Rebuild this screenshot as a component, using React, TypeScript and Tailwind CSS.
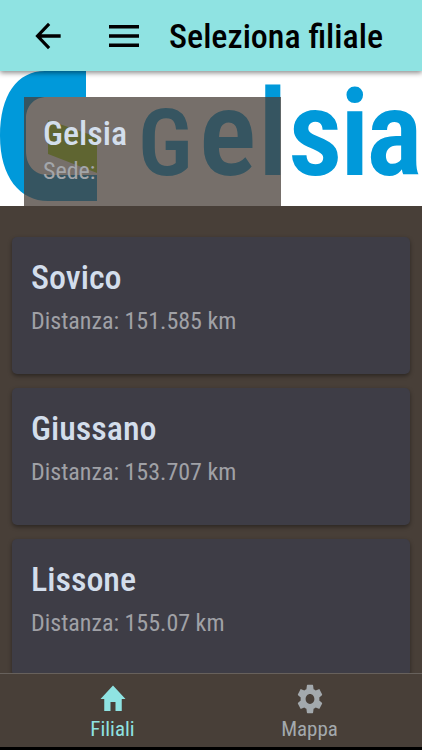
import React from "react";

type Branch = { name: string; distance: string };

const branches: Branch[] = [
  { name: "Sovico", distance: "151.585 km" },
  { name: "Giussano", distance: "153.707 km" },
  { name: "Lissone", distance: "155.07 km" },
];

function Header() {
  return (
    <header className="relative z-10 flex h-[71px] shrink-0 items-center bg-[#8fe3e2] pl-7 text-black shadow-[0_2px_5px_rgba(0,0,0,0.45)]">
      <button type="button" aria-label="Indietro" className="flex h-10 w-10 items-center justify-center">
        <svg className="h-[40px] w-[38px]" viewBox="0 0 24 24" preserveAspectRatio="none" fill="currentColor">
          <path d="M20 11H7.83l5.59-5.59L12 4l-8 8 8 8 1.41-1.41L7.83 13H20v-2z" />
        </svg>
      </button>
      <button type="button" aria-label="Menu" className="ml-9 flex h-10 w-10 items-center justify-center">
        <svg className="h-6 w-[30px]" viewBox="0 0 30 24" fill="currentColor">
          <path d="M0 1h30v3.5H0zM0 10.2h30v3.5H0zM0 19.4h30v3.5H0z" />
        </svg>
      </button>
      <h1 className="ml-[25px] whitespace-nowrap text-[34px] leading-9 font-medium">Seleziona filiale</h1>
    </header>
  );
}

function Banner() {
  return (
    <section className="relative shrink-0 bg-white">
      <svg className="block w-full" viewBox="0 0 422 135" role="img" aria-label="Logo Gelsia">
        <path d="M86 0H45C17 0 0 24 0 65s20 65 48 65h49v-26H48C34 104 26 94 26 80V48C26 35 34 26 47 26h39z" fill="#0099da" />
        <path d="M48 49l49 17v36L48 83z" fill="#a5d51f" />
        <text
          x="138 199 258 288 340 366"
          y="104"
          fill="#0099da"
          fontFamily="'Roboto Condensed', Roboto, sans-serif"
          fontWeight="600"
          fontSize="120"
        >
          <tspan fontSize="93">G</tspan>elsia
        </text>
      </svg>
      <div className="absolute bottom-0 left-6 h-[109px] w-[257px] bg-[#483f38]/75 px-[19px] pt-4">
        <h2 className="text-[34px] leading-10 font-medium text-[#d3deec]">Gelsia</h2>
        <p className="text-[24px] leading-9 text-[#a3a6aa]">Sede:</p>
      </div>
    </section>
  );
}

function BranchCard({ name, distance }: Branch) {
  return (
    <li className="h-[137px] shrink-0 rounded-[5px] bg-[#3e3d46] px-[19px] pt-5 shadow-[0_2px_4px_rgba(0,0,0,0.4)]">
      <h2 className="text-[34px] leading-10 font-medium text-[#d3deec]">{name}</h2>
      <p className="mt-1.5 text-[24px] leading-9 text-[#a0a1a6]">Distanza: {distance}</p>
    </li>
  );
}

function TabBar() {
  return (
    <nav className="flex h-[77px] shrink-0 border-t border-b-[3px] border-t-[#67615c] border-b-black bg-[#483f38]">
      <a href="#filiali" aria-current="page" className="flex flex-1 flex-col items-center pt-[7px] pl-[14px] text-[#8fe3e2]">
        <svg className="h-9 w-[30px]" viewBox="0 0 24 24" preserveAspectRatio="none" fill="currentColor">
          <path d="M10 20v-6h4v6h5v-8h3L12 3 2 12h3v8z" />
        </svg>
        <span className="text-[21px] leading-6">Filiali</span>
      </a>
      <a href="#mappa" className="flex flex-1 flex-col items-center pt-[7px] pr-[14px] text-[#a3a9ad]">
        <svg className="h-9 w-[30px]" viewBox="0 -0.7 24 25.4" preserveAspectRatio="none" fill="currentColor">
          <path d="M19.43 12.98c.04-.32.07-.64.07-.98s-.03-.66-.07-.98l2.11-1.65c.19-.15.24-.42.12-.64l-2-3.46c-.12-.22-.39-.3-.61-.22l-2.49 1c-.52-.4-1.08-.73-1.69-.98l-.38-2.65C14.46 2.18 14.25 2 14 2h-4c-.25 0-.46.18-.49.42l-.38 2.65c-.61.25-1.17.59-1.69.98l-2.49-1c-.23-.09-.49 0-.61.22l-2 3.46c-.13.22-.07.49.12.64l2.11 1.65c-.04.32-.07.65-.07.98s.03.66.07.98l-2.11 1.65c-.19.15-.24.42-.12.64l2 3.46c.12.22.39.3.61.22l2.49-1c.52.4 1.08.73 1.69.98l.38 2.65c.03.24.24.42.49.42h4c.25 0 .46-.18.49-.42l.38-2.65c.61-.25 1.17-.59 1.69-.98l2.49 1c.23.09.49 0 .61-.22l2-3.46c.12-.22.07-.49-.12-.64l-2.11-1.65zM12 15.5c-1.93 0-3.5-1.57-3.5-3.5s1.57-3.5 3.5-3.5 3.5 1.57 3.5 3.5-1.57 3.5-3.5 3.5z" />
        </svg>
        <span className="text-[21px] leading-6">Mappa</span>
      </a>
    </nav>
  );
}

export default function App() {
  return (
    <div className="flex h-screen flex-col overflow-hidden bg-[#483f38] font-['Roboto_Condensed',Roboto,sans-serif]">
      <Header />
      <main className="flex min-h-0 flex-1 flex-col overflow-hidden">
        <Banner />
        <ul className="flex flex-col gap-[14px] px-3 pt-[31px]">
          {branches.map((branch) => (
            <BranchCard key={branch.name} {...branch} />
          ))}
        </ul>
      </main>
      <TabBar />
    </div>
  );
}
